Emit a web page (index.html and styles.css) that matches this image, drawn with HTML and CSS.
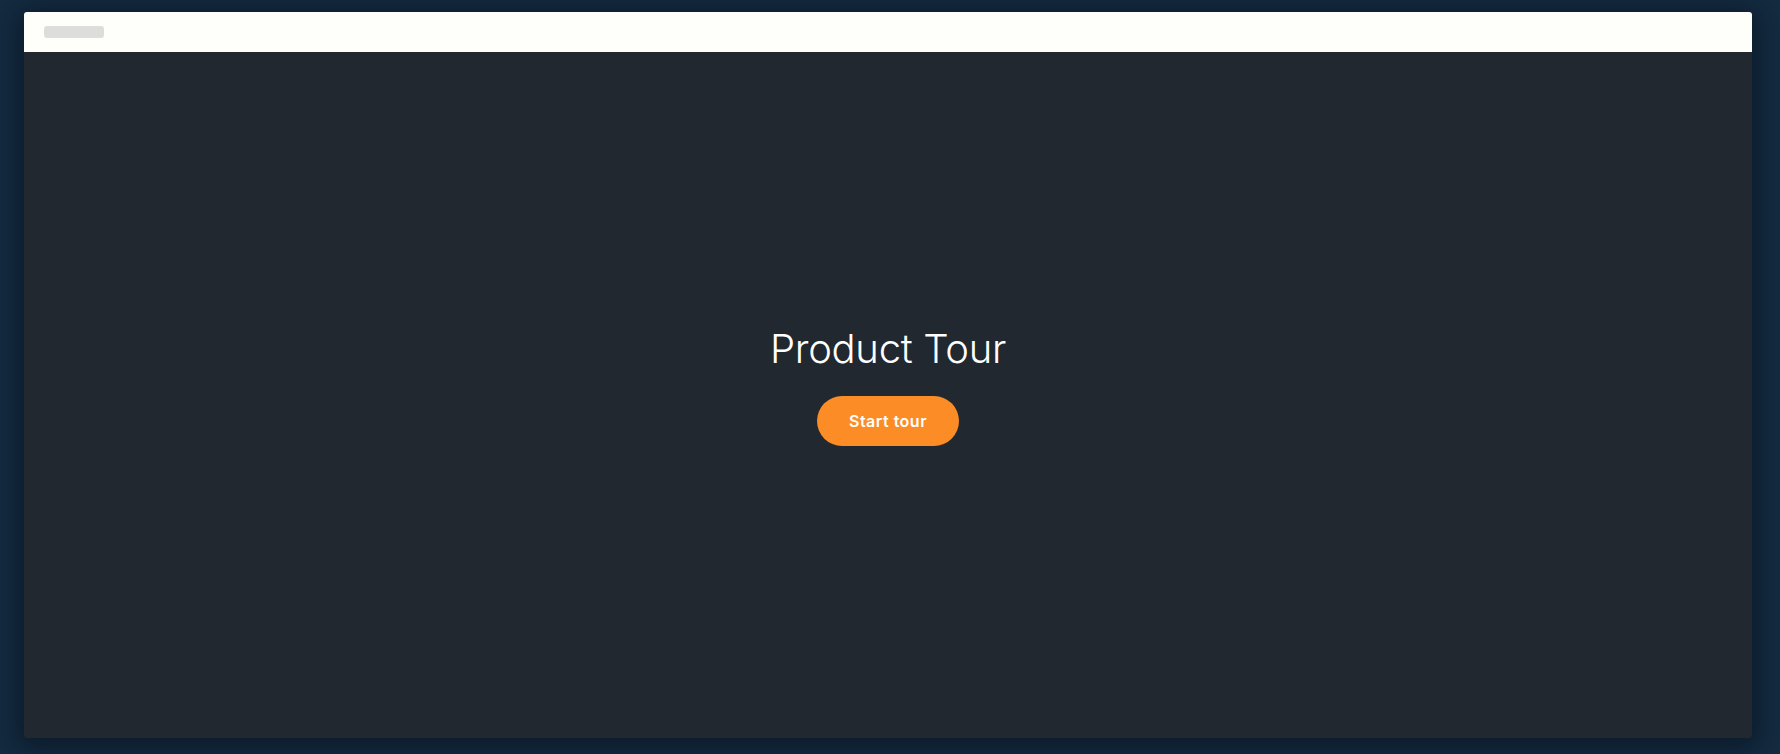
FILE: index.html
```html
<!DOCTYPE html>
<html>
<head>
<meta charset="utf-8">
<link rel="stylesheet" href="styles.css">
</head>
<body>
<div class="window">
  <div class="titlebar"><span class="pill"></span></div>
  <main class="content">
    <h1 class="title">Product Tour</h1>
    <button class="start">Start tour</button>
  </main>
</div>
</body>
</html>
```
FILE: styles.css
```css
html, body {
  margin: 0;
  height: 100%;
}
body {
  background: #142b40;
  padding: 12px 28px 16px 24px;
  box-sizing: border-box;
  display: flex;
  font-family: Inter, "Liberation Sans", sans-serif;
}
.window {
  flex: 1;
  display: flex;
  flex-direction: column;
  background: #21282f;
  border-radius: 3px;
  overflow: hidden;
  box-shadow: 0 4px 24px 6px rgba(5, 15, 25, 0.55);
}
.titlebar {
  height: 40px;
  background: #fefffb;
  display: flex;
  align-items: center;
  padding-left: 20px;
}
.pill {
  width: 60px;
  height: 12px;
  border-radius: 3px;
  background: #dddedb;
}
.content {
  flex: 1;
  display: flex;
  flex-direction: column;
  align-items: center;
  justify-content: center;
  padding-bottom: 20px;
}
.title {
  margin: 0;
  font-weight: 300;
  font-size: 40px;
  line-height: 48px;
  color: #ffffff;
  letter-spacing: -0.3px;
}
.start {
  margin-top: 23px;
  width: 142px;
  height: 50px;
  border: none;
  border-radius: 25px;
  background: #fb8c26;
  color: #fff;
  font-family: Inter, "Liberation Sans", sans-serif;
  font-weight: 600;
  font-size: 16px;
  letter-spacing: 0.5px;
}
```
